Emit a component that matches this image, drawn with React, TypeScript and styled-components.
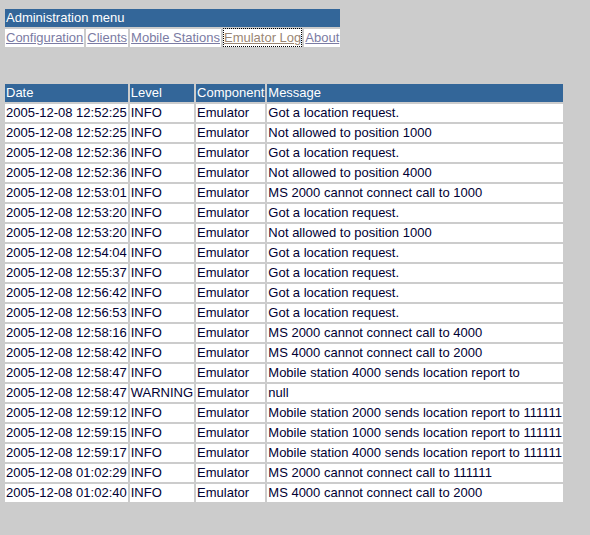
import React from 'react';
import styled, {createGlobalStyle} from "styled-components";

const GlobalStyle = createGlobalStyle`
    html, body {
        margin: 0;
        padding: 0;
        background: #cccccc;
    }
    body {
        padding: 7px 3px;
        font-family: "Liberation Sans", Arial, sans-serif;
        font-size: 13px;
        color: #000033;
    }
`;

type LogEntry = {
    date: string
    level: string
    component: string
    message: string
}

const menuItems = ["Configuration", "Clients", "Mobile Stations", "Emulator Log", "About"];
const activeItem = "Emulator Log";

const log: LogEntry[] = [
    {date: "2005-12-08 12:52:25", level: "INFO", component: "Emulator", message: "Got a location request."},
    {date: "2005-12-08 12:52:25", level: "INFO", component: "Emulator", message: "Not allowed to position 1000"},
    {date: "2005-12-08 12:52:36", level: "INFO", component: "Emulator", message: "Got a location request."},
    {date: "2005-12-08 12:52:36", level: "INFO", component: "Emulator", message: "Not allowed to position 4000"},
    {date: "2005-12-08 12:53:01", level: "INFO", component: "Emulator", message: "MS 2000 cannot connect call to 1000"},
    {date: "2005-12-08 12:53:20", level: "INFO", component: "Emulator", message: "Got a location request."},
    {date: "2005-12-08 12:53:20", level: "INFO", component: "Emulator", message: "Not allowed to position 1000"},
    {date: "2005-12-08 12:54:04", level: "INFO", component: "Emulator", message: "Got a location request."},
    {date: "2005-12-08 12:55:37", level: "INFO", component: "Emulator", message: "Got a location request."},
    {date: "2005-12-08 12:56:42", level: "INFO", component: "Emulator", message: "Got a location request."},
    {date: "2005-12-08 12:56:53", level: "INFO", component: "Emulator", message: "Got a location request."},
    {date: "2005-12-08 12:58:16", level: "INFO", component: "Emulator", message: "MS 2000 cannot connect call to 4000"},
    {date: "2005-12-08 12:58:42", level: "INFO", component: "Emulator", message: "MS 4000 cannot connect call to 2000"},
    {date: "2005-12-08 12:58:47", level: "INFO", component: "Emulator", message: "Mobile station 4000 sends location report to"},
    {date: "2005-12-08 12:58:47", level: "WARNING", component: "Emulator", message: "null"},
    {date: "2005-12-08 12:59:12", level: "INFO", component: "Emulator", message: "Mobile station 2000 sends location report to 111111"},
    {date: "2005-12-08 12:59:15", level: "INFO", component: "Emulator", message: "Mobile station 1000 sends location report to 111111"},
    {date: "2005-12-08 12:59:17", level: "INFO", component: "Emulator", message: "Mobile station 4000 sends location report to 111111"},
    {date: "2005-12-08 01:02:29", level: "INFO", component: "Emulator", message: "MS 2000 cannot connect call to 111111"},
    {date: "2005-12-08 01:02:40", level: "INFO", component: "Emulator", message: "MS 4000 cannot connect call to 2000"},
];

const App: React.FC = () => {
    return (
        <>
            <GlobalStyle />
            <Menu>
                <MenuTitle>Administration menu</MenuTitle>
                <MenuLinks>
                    {
                        menuItems.map(item => (
                            <MenuCell key={item}>
                                <MenuLink href="#" active={item === activeItem}>{item}</MenuLink>
                            </MenuCell>
                        ))
                    }
                </MenuLinks>
            </Menu>

            <LogTable>
                <thead>
                    <tr>
                        <HeadCell>Date</HeadCell>
                        <HeadCell>Level</HeadCell>
                        <HeadCell>Component</HeadCell>
                        <HeadCell>Message</HeadCell>
                    </tr>
                </thead>
                <tbody>
                    {
                        log.map((entry, i) => (
                            <tr key={i}>
                                <Cell>{entry.date}</Cell>
                                <Cell>{entry.level}</Cell>
                                <Cell>{entry.component}</Cell>
                                <Cell>{entry.message}</Cell>
                            </tr>
                        ))
                    }
                </tbody>
            </LogTable>
        </>
    )
};

const Menu = styled.div`
    display: inline-flex;
    flex-direction: column;
    gap: 2px;
    padding: 2px;
`;

const MenuTitle = styled.div`
    background: #336699;
    color: #ffffff;
    height: 18px;
    line-height: 17px;
    padding: 0 1px;
`;

const MenuLinks = styled.div`
    display: flex;
    gap: 2px;
`;

const MenuCell = styled.div`
    background: #ffffff;
    height: 18px;
    padding: 0 1px;
    display: flex;
    align-items: stretch;
`;

const MenuLink = styled.a<{active?: boolean}>`
    display: block;
    line-height: 17px;
    height: 17px;
    color: ${props => props.active ? "#9a8674" : "#7b7ba3"};
    text-decoration: underline;
    outline: ${props => props.active ? "1px dotted #000000" : "none"};
    outline-offset: 0;
`;

const LogTable = styled.table`
    margin-top: 33px;
    border-collapse: separate;
    border-spacing: 2px;
    font-size: 13px;
    color: #000033;
`;

const HeadCell = styled.th`
    background: #336699;
    color: #ffffff;
    font-weight: normal;
    text-align: left;
    white-space: nowrap;
    height: 18px;
    line-height: 16px;
    padding: 0 1px;
`;

const Cell = styled.td`
    background: #ffffff;
    white-space: nowrap;
    height: 18px;
    line-height: 16px;
    padding: 0 1px;
`;

export default App;
